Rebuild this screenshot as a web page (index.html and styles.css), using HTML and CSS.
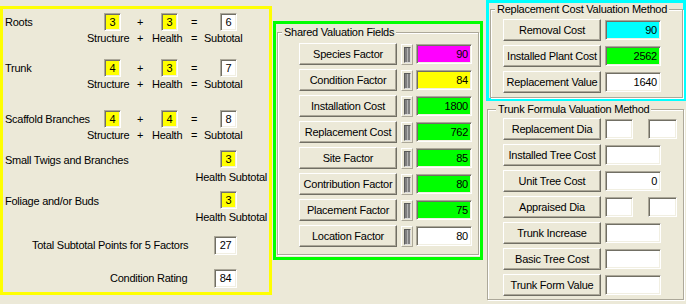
FILE: index.html
```html
<!DOCTYPE html>
<html lang="en">

<head>
    <meta charset="UTF-8">
    <title>Tree Valuation</title>
    <link rel="stylesheet" href="styles.css">
</head>

<body>
    <div class="form">

        <!-- condition points -->
        <div class="panel condition">
            <div class="crit crit-roots">
                <div class="crit-top">
                    <span class="crit-name">Roots</span>
                    <span class="num hl">3</span>
                    <span class="op op-plus">+</span>
                    <span class="num hl">3</span>
                    <span class="op op-eq">=</span>
                    <span class="num">6</span>
                </div>
                <div class="crit-legend">
                    <span>Structure</span><span>+</span><span>Health</span><span>=</span><span>Subtotal</span>
                </div>
            </div>

            <div class="crit crit-trunk">
                <div class="crit-top">
                    <span class="crit-name">Trunk</span>
                    <span class="num hl">4</span>
                    <span class="op op-plus">+</span>
                    <span class="num hl">3</span>
                    <span class="op op-eq">=</span>
                    <span class="num">7</span>
                </div>
                <div class="crit-legend">
                    <span>Structure</span><span>+</span><span>Health</span><span>=</span><span>Subtotal</span>
                </div>
            </div>

            <div class="crit crit-scaffold">
                <div class="crit-top">
                    <span class="crit-name">Scaffold Branches</span>
                    <span class="num hl">4</span>
                    <span class="op op-plus">+</span>
                    <span class="num hl">4</span>
                    <span class="op op-eq">=</span>
                    <span class="num">8</span>
                </div>
                <div class="crit-legend">
                    <span>Structure</span><span>+</span><span>Health</span><span>=</span><span>Subtotal</span>
                </div>
            </div>

            <div class="single single-twigs">
                <span class="crit-name">Small Twigs and Branches</span>
                <span class="num hl">3</span>
            </div>
            <div class="single-legend">Health Subtotal</div>

            <div class="single single-foliage">
                <span class="crit-name">Foliage and/or Buds</span>
                <span class="num hl">3</span>
            </div>
            <div class="single-legend">Health Subtotal</div>

            <div class="total total-points">
                <span class="total-name">Total Subtotal Points for 5 Factors</span>
                <span class="num wide">27</span>
            </div>

            <div class="total total-rating">
                <span class="total-name">Condition Rating</span>
                <span class="num wide">84</span>
            </div>
        </div>

        <!-- shared fields -->
        <div class="panel shared">
            <div class="group group-shared">
                <span class="group-title">Shared Valuation Fields</span>
                <div class="row"><button class="btn">Species Factor</button><span class="tog"><i></i></span><span class="tb magenta">90</span></div>
                <div class="row"><button class="btn">Condition Factor</button><span class="tog"><i></i></span><span class="tb yellow">84</span></div>
                <div class="row"><button class="btn">Installation Cost</button><span class="tog"><i></i></span><span class="tb green">1800</span></div>
                <div class="row"><button class="btn">Replacement Cost</button><span class="tog"><i></i></span><span class="tb green">762</span></div>
                <div class="row"><button class="btn">Site Factor</button><span class="tog"><i></i></span><span class="tb green">85</span></div>
                <div class="row"><button class="btn">Contribution Factor</button><span class="tog"><i></i></span><span class="tb green">80</span></div>
                <div class="row"><button class="btn">Placement Factor</button><span class="tog"><i></i></span><span class="tb green">75</span></div>
                <div class="row"><button class="btn">Location Factor</button><span class="tog"><i></i></span><span class="tb">80</span></div>
            </div>
        </div>

        <div class="side">
            <div class="panel replace">
                <div class="group group-replace">
                    <span class="group-title">Replacement Cost Valuation Method</span>
                    <div class="row"><button class="btn">Removal Cost</button><span class="tb cyan">90</span></div>
                    <div class="row"><button class="btn">Installed Plant Cost</button><span class="tb green">2562</span></div>
                    <div class="row"><button class="btn">Replacement Value</button><span class="tb">1640</span></div>
                </div>
            </div>

            <div class="group group-trunk">
                <span class="group-title">Trunk Formula Valuation Method</span>
                <div class="row"><button class="btn">Replacement Dia</button><span class="tb sm"></span><span class="tb sm second"></span></div>
                <div class="row"><button class="btn">Installed Tree Cost</button><span class="tb"></span></div>
                <div class="row"><button class="btn">Unit Tree Cost</button><span class="tb">0</span></div>
                <div class="row"><button class="btn">Appraised Dia</button><span class="tb sm"></span><span class="tb sm second"></span></div>
                <div class="row"><button class="btn">Trunk Increase</button><span class="tb"></span></div>
                <div class="row"><button class="btn">Basic Tree Cost</button><span class="tb"></span></div>
                <div class="row"><button class="btn">Trunk Form Value</button><span class="tb"></span></div>
            </div>
        </div>

    </div>
</body>

</html>
```

FILE: styles.css
```css
* {
    margin: 0;
    padding: 0;
    box-sizing: border-box;
}

body {
    width: 686px;
    height: 304px;
    overflow: hidden;
    background: #ece9d8;
    color: #000;
    font-family: "Liberation Sans", Arial, sans-serif;
    font-size: 11px;
    line-height: 13px;
    letter-spacing: -0.25px;
}

.form {
    display: flex;
    align-items: flex-start;
}

.panel {
    display: flex;
    flex-direction: column;
}

/* left: condition points */
.condition {
    margin-top: 6px;
    width: 272px;
    height: 289px;
    border: 3px solid #ffff00;
}

.crit-top {
    display: grid;
    grid-template-columns: 101px 17px 40px 17px 42px 17px;
    align-items: center;
    height: 18px;
}

.crit-name {
    padding-left: 2px;
    white-space: nowrap;
}

.op-plus {
    padding-left: 16px;
}

.op-eq {
    padding-left: 13px;
}

.crit-legend {
    display: grid;
    grid-template-columns: 50px 15px 39px 13px auto;
    height: 13px;
    margin-top: 1px;
    padding-left: 84px;
}

.crit-roots {
    margin-top: 4px;
}

.crit-trunk {
    margin-top: 14px;
}

.crit-scaffold {
    margin-top: 19px;
}

.num {
    display: flex;
    align-items: center;
    justify-content: center;
    width: 17px;
    height: 18px;
    background: #fff;
    border: 1px solid;
    border-color: #aca899 #fff #fff #aca899;
    box-shadow: inset 1px 1px 0 #716f64, inset -1px -1px 0 #f1efe2;
}

.num.hl {
    background: #ffff00;
}

.num.wide {
    width: 23px;
    height: 19px;
}

.single {
    display: grid;
    grid-template-columns: 217px 17px;
    align-items: end;
}

.single .crit-name {
    margin-bottom: 1px;
}

.single-twigs {
    margin-top: 8px;
}

.single-foliage {
    margin-top: 7px;
}

.single-legend {
    height: 13px;
    margin-top: 3px;
    padding-right: 2px;
    text-align: right;
}

.single-foliage + .single-legend {
    margin-top: 2px;
}

.total {
    display: grid;
    grid-template-columns: 211px 23px;
    align-items: center;
}

.total-points {
    margin-top: 12px;
}

.total-points .total-name {
    padding-left: 29px;
}

.total-rating {
    margin-top: 14px;
}

.total-rating .total-name {
    padding-left: 107px;
}

/* group boxes */
.group {
    position: relative;
    border: 1px solid #aca899;
    box-shadow: inset 1px 1px 0 #fff, 1px 1px 0 #fff;
}

.group-title {
    position: absolute;
    top: -7px;
    left: 4px;
    padding: 0 2px;
    background: #ece9d8;
    white-space: nowrap;
}

.row {
    display: flex;
    align-items: center;
    gap: 4px;
    height: 22px;
    margin-bottom: 4px;
}

.btn {
    width: 98px;
    height: 22px;
    background: #ece9d8;
    border: 1px solid;
    border-color: #fff #716f64 #716f64 #fff;
    box-shadow: inset -1px -1px 0 #aca899;
    font: inherit;
    letter-spacing: inherit;
    color: #000;
    white-space: nowrap;
}

.tb {
    display: block;
    width: 56px;
    height: 20px;
    padding: 3px 3px 0 0;
    text-align: right;
    background: #fff;
    border: 1px solid;
    border-color: #aca899 #fff #fff #aca899;
    box-shadow: inset 1px 1px 0 #716f64, inset -1px -1px 0 #f1efe2;
}

.tb.sm {
    width: 28px;
}

.tb.sm.second {
    width: 29px;
    margin-left: 11px;
}

.magenta { background: #ff00ff; }
.yellow { background: #ffff00; }
.green { background: #00ff00; }
.cyan { background: #00ffff; }

.tog {
    display: flex;
    justify-content: center;
    width: 12px;
    height: 21px;
    padding-top: 2px;
    border: 1px solid;
    border-color: #fff #aca899 #aca899 #fff;
}

.tog i {
    display: block;
    width: 7px;
    height: 16px;
    background: #808080;
    border: 1px solid;
    border-color: #5a5a5a #ddd #ddd #5a5a5a;
    box-shadow: inset 2px 0 0 #808080, inset -2px 0 0 #808080, inset 0 0 0 4px #b4b4b4;
}

/* middle: shared fields */
.shared {
    margin-top: 21px;
    margin-left: 1px;
    width: 210px;
    height: 239px;
    border: 3px solid #00ff00;
}

.group-shared {
    flex: 1;
    margin: 8px 1px 2px 1px;
    padding: 10px 0 0 21px;
}

.group-shared .row {
    gap: 0;
}

.group-shared .tog {
    margin: 0 3px 0 4px;
}

/* right column */
.side {
    display: flex;
    flex-direction: column;
    width: 200px;
    margin-left: 3px;
}

.replace {
    height: 101px;
    border: 3px solid #00ffff;
}

.group-replace {
    flex: 1;
    margin: 6px 0 2px 1px;
    padding: 9px 0 0 12px;
}

.group-trunk {
    width: 197px;
    height: 191px;
    margin: 8px 0 0 1px;
    padding: 8px 0 0 15px;
}

.group-trunk .group-title {
    left: 8px;
}
```
